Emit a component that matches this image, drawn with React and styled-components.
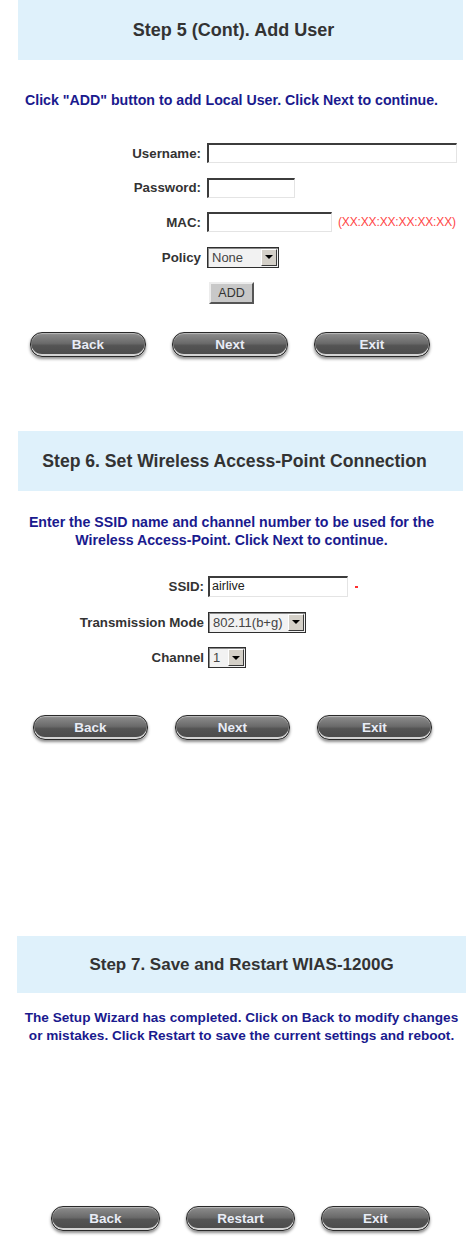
import React from 'react'
import styled, { createGlobalStyle } from 'styled-components'

const GlobalStyle = createGlobalStyle`
  body {
    margin: 0;
    background: #fff;
    font-family: "Liberation Sans", Arial, sans-serif;
  }
`

const Page = styled.div`
  width: 469px;
  height: 1243px;
  overflow: hidden;
`

const Section = styled.section`
  margin-top: ${p => p.$top || 0}px;
`

const Band = styled.div`
  box-sizing: border-box;
  margin-left: ${p => p.$left || 18}px;
  width: ${p => p.$width || 445}px;
  height: ${p => p.$height || 60}px;
  padding-right: ${p => p.$shift || 0}px;
  background: #dff1fb;
  display: flex;
  align-items: center;
  justify-content: center;
`

const Title = styled.h2`
  margin: 0;
  font-size: ${p => p.$size || 17.5}px;
  font-weight: bold;
  color: #333;
`

const Instruction = styled.p`
  margin: ${p => p.$top}px 0 0;
  width: ${p => p.$width || 463}px;
  text-align: center;
  font-size: ${p => p.$size || 14.2}px;
  line-height: 18px;
  font-weight: bold;
  color: #1a1a8e;
  white-space: nowrap;
`

const Form = styled.div`
  margin-top: ${p => p.$top}px;
  display: flex;
  flex-direction: column;
  gap: 14.5px;
`

const FieldRow = styled.div`
  display: grid;
  grid-template-columns: ${p => p.$labelWidth}px auto;
  column-gap: ${p => p.$gap || 6}px;
  align-items: center;
  height: ${p => p.$height || 20}px;
`

const Label = styled.label`
  text-align: right;
  font-size: 13.3px;
  font-weight: bold;
  color: #333;
  white-space: nowrap;
`

const Field = styled.div`
  display: flex;
  align-items: center;
  gap: 6px;
`

const TextInput = styled.div`
  box-sizing: border-box;
  width: ${p => p.$width}px;
  height: ${p => p.$height || 20}px;
  border: 2px solid;
  border-color: #3c3c3c #e4e4e4 #e4e4e4 #3c3c3c;
  border-width: 2px 1px 1px 2px;
  background: #fff;
  font-size: 12.5px;
  line-height: 17px;
  padding-left: 2px;
  color: #222;
`

const Hint = styled.span`
  font-size: 12px;
  color: #ff4646;
  letter-spacing: -0.15px;
  white-space: nowrap;
`

const Required = styled.span`
  display: inline-block;
  width: 3px;
  height: 2px;
  margin-left: 1px;
  background: #ff3030;
`

const SelectBox = styled.div`
  box-sizing: border-box;
  width: ${p => p.$width}px;
  height: ${p => p.$height || 20}px;
  display: flex;
  align-items: center;
  justify-content: space-between;
  border: 1px solid #2e2e2e;
  box-shadow: inset 1px 1px 0 #8a8a8a;
  background: #f2f2f2;
  font-size: 13px;
  color: #444;
  padding: 0 1px 0 4px;
`

const Arrow = styled.span`
  box-sizing: border-box;
  width: 16px;
  height: 17px;
  background: #d4d0c8;
  border: 1px solid;
  border-color: #fff #3a3a3a #3a3a3a #fff;
  display: flex;
  align-items: center;
  justify-content: center;

  &::after {
    content: '';
    border-left: 4px solid transparent;
    border-right: 4px solid transparent;
    border-top: 4px solid #000;
  }
`

const AddButton = styled.button`
  box-sizing: border-box;
  width: 45px;
  height: 22px;
  margin-left: 2px;
  background: #c8c8c8;
  border: 2px solid;
  border-color: #ececec #555 #555 #ececec;
  font-family: "Liberation Sans", Arial, sans-serif;
  font-size: 12.5px;
  color: #333;
  padding: 0;
`

const ButtonRow = styled.div`
  margin-top: ${p => p.$top}px;
  padding-left: ${p => p.$left}px;
  display: flex;
  gap: ${p => p.$gap}px;
`

const PillButton = styled.button`
  box-sizing: border-box;
  width: ${p => p.$width}px;
  height: 25px;
  border-radius: 12px;
  border: 1px solid #2a2a2a;
  background: linear-gradient(#8e8e8e 0%, #6a6a6a 45%, #545454 55%, #4a4a4a 100%);
  box-shadow:
    inset 0 -2px 0 rgba(235, 235, 235, 0.85),
    inset 0 1px 1px rgba(255, 255, 255, 0.4),
    0 2px 3px rgba(0, 0, 0, 0.45);
  color: #e8ecf6;
  font-family: "Liberation Sans", Arial, sans-serif;
  font-size: 13.5px;
  font-weight: bold;
  padding: 0 0 1px;
`

const Select = ({ width, height, value }) => (
  <SelectBox $width={width} $height={height}>
    <span>{value}</span>
    <Arrow />
  </SelectBox>
)

const Buttons = ({ labels, top, left, gap, width }) => (
  <ButtonRow $top={top} $left={left} $gap={gap}>
    {labels.map(l => (
      <PillButton key={l} $width={width}>
        {l}
      </PillButton>
    ))}
  </ButtonRow>
)

const App = () => (
  <Page>
    <GlobalStyle />

    <Section>
      <Band $shift={14}>
        <Title $size={18}>Step 5 (Cont). Add User</Title>
      </Band>
      <Instruction $top={31}>
        Click "ADD" button to add Local User. Click Next to continue.
      </Instruction>
      <Form $top={34}>
        <FieldRow $labelWidth={201}>
          <Label>Username:</Label>
          <TextInput $width={250} />
        </FieldRow>
        <FieldRow $labelWidth={201}>
          <Label>Password:</Label>
          <TextInput $width={88} />
        </FieldRow>
        <FieldRow $labelWidth={201}>
          <Label>MAC:</Label>
          <Field>
            <TextInput $width={125} />
            <Hint>(XX:XX:XX:XX:XX:XX)</Hint>
          </Field>
        </FieldRow>
        <FieldRow $labelWidth={201} $height={21}>
          <Label>Policy</Label>
          <Select width={72} height={21} value="None" />
        </FieldRow>
        <FieldRow $labelWidth={201} $height={22}>
          <span />
          <AddButton>ADD</AddButton>
        </FieldRow>
      </Form>
      <Buttons labels={['Back', 'Next', 'Exit']} top={28} left={30} gap={26} width={116} />
    </Section>

    <Section $top={74}>
      <Band $shift={12}>
        <Title $size={17.6}>Step 6. Set Wireless Access-Point Connection</Title>
      </Band>
      <Instruction $top={22}>
        Enter the SSID name and channel number to be used for the
        <br />
        Wireless Access-Point. Click Next to continue.
      </Instruction>
      <Form $top={27}>
        <FieldRow $labelWidth={204} $gap={4} $height={21}>
          <Label>SSID:</Label>
          <Field>
            <TextInput $width={140} $height={21}>airlive</TextInput>
            <Required />
          </Field>
        </FieldRow>
        <FieldRow $labelWidth={204} $gap={4} $height={21}>
          <Label>Transmission Mode</Label>
          <Select width={98} height={21} value="802.11(b+g)" />
        </FieldRow>
        <FieldRow $labelWidth={204} $gap={4} $height={21}>
          <Label>Channel</Label>
          <Select width={38} height={21} value="1" />
        </FieldRow>
      </Form>
      <Buttons labels={['Back', 'Next', 'Exit']} top={47} left={33} gap={27} width={115} />
    </Section>

    <Section $top={196}>
      <Band $left={17} $width={449} $height={57}>
        <Title $size={17}>Step 7. Save and Restart WIAS-1200G</Title>
      </Band>
      <Instruction $top={16} $width={483} $size={13.6}>
        The Setup Wizard has completed. Click on Back to modify changes
        <br />
        or mistakes. Click Restart to save the current settings and reboot.
      </Instruction>
      <Buttons labels={['Back', 'Restart', 'Exit']} top={161} left={51} gap={26} width={109} />
    </Section>
  </Page>
)

export default App
